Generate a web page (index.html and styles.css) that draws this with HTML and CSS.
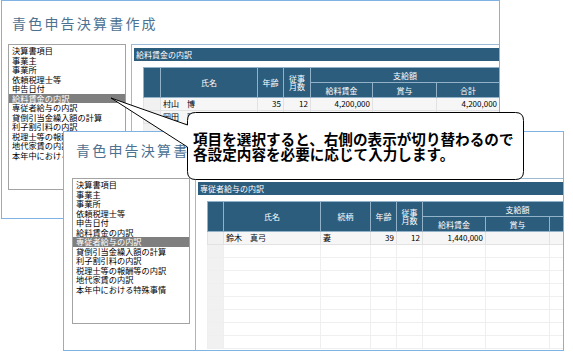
FILE: index.html
```html
<!DOCTYPE html>
<html lang="ja">
<head>
    <meta charset="UTF-8">
    <meta name="viewport" content="width=device-width, initial-scale=1.0">
    <title>青色申告決算書作成</title>
    <link rel="stylesheet" href="styles.css">
</head>
<body>
    <!-- 奥のウィンドウ : 給料賃金の内訳 -->
    <div class="win win-back">
        <div class="win-title">青色申告決算書作成</div>
        <div class="win-body">
            <ul class="item-list">
                <li>決算書項目</li>
                <li>事業主</li>
                <li>事業所</li>
                <li>依頼税理士等</li>
                <li>申告日付</li>
                <li class="selected">給料賃金の内訳</li>
                <li>専従者給与の内訳</li>
                <li>貸倒引当金繰入額の計算</li>
                <li>利子割引料の内訳</li>
                <li>税理士等の報酬等の内訳</li>
                <li>地代家賃の内訳</li>
                <li>本年中における特殊事情</li>
            </ul>
            <div class="panel">
                <div class="panel-bar">給料賃金の内訳</div>
                <table class="grid grid-back">
                    <colgroup>
                        <col style="width:17px">
                        <col style="width:97px">
                        <col style="width:26px">
                        <col style="width:27px">
                        <col style="width:62px">
                        <col style="width:64px">
                        <col style="width:63px">
                    </colgroup>
                    <tr>
                        <th rowspan="2"></th>
                        <th rowspan="2">氏名</th>
                        <th rowspan="2">年齢</th>
                        <th rowspan="2" class="two-line">従事<br>月数</th>
                        <th colspan="3">支給額</th>
                    </tr>
                    <tr>
                        <th>給料賃金</th>
                        <th>賞与</th>
                        <th>合計</th>
                    </tr>
                    <tr class="filled">
                        <td class="row-head"></td>
                        <td>村山　博</td>
                        <td class="num">35</td>
                        <td class="num">12</td>
                        <td class="num">4,200,000</td>
                        <td></td>
                        <td class="num">4,200,000</td>
                    </tr>
                    <tr class="filled">
                        <td class="row-head"></td>
                        <td>岡田　聡</td>
                        <td class="num">28</td>
                        <td class="num">12</td>
                        <td class="num">3,000,000</td>
                        <td></td>
                        <td class="num">3,000,000</td>
                    </tr>
                    <tr>
                        <td class="row-head"></td>
                        <td></td><td></td><td></td><td></td><td></td><td></td>
                    </tr>
                </table>
            </div>
        </div>
    </div>

    <!-- 手前のウィンドウ : 専従者給与の内訳 -->
    <div class="win win-front">
        <div class="win-title">青色申告決算書作成</div>
        <div class="win-body">
            <ul class="item-list">
                <li>決算書項目</li>
                <li>事業主</li>
                <li>事業所</li>
                <li>依頼税理士等</li>
                <li>申告日付</li>
                <li>給料賃金の内訳</li>
                <li class="selected">専従者給与の内訳</li>
                <li>貸倒引当金繰入額の計算</li>
                <li>利子割引料の内訳</li>
                <li>税理士等の報酬等の内訳</li>
                <li>地代家賃の内訳</li>
                <li>本年中における特殊事情</li>
            </ul>
            <div class="panel">
                <div class="panel-bar">専従者給与の内訳</div>
                <table class="grid grid-front">
                    <colgroup>
                        <col style="width:16px">
                        <col style="width:97px">
                        <col style="width:50px">
                        <col style="width:26px">
                        <col style="width:26px">
                        <col style="width:63px">
                        <col style="width:64px">
                        <col style="width:63px">
                    </colgroup>
                    <tr>
                        <th rowspan="2"></th>
                        <th rowspan="2">氏名</th>
                        <th rowspan="2">続柄</th>
                        <th rowspan="2">年齢</th>
                        <th rowspan="2" class="two-line">従事<br>月数</th>
                        <th colspan="3">支給額</th>
                    </tr>
                    <tr>
                        <th>給料賃金</th>
                        <th>賞与</th>
                        <th></th>
                    </tr>
                    <tr class="filled">
                        <td class="row-head"></td>
                        <td>鈴木　真弓</td>
                        <td>妻</td>
                        <td class="num">39</td>
                        <td class="num">12</td>
                        <td class="num">1,440,000</td>
                        <td></td>
                        <td></td>
                    </tr>
                    <tr><td class="row-head"></td><td></td><td></td><td></td><td></td><td></td><td></td><td></td></tr>
                    <tr><td class="row-head"></td><td></td><td></td><td></td><td></td><td></td><td></td><td></td></tr>
                    <tr><td class="row-head"></td><td></td><td></td><td></td><td></td><td></td><td></td><td></td></tr>
                    <tr><td class="row-head"></td><td></td><td></td><td></td><td></td><td></td><td></td><td></td></tr>
                    <tr><td class="row-head"></td><td></td><td></td><td></td><td></td><td></td><td></td><td></td></tr>
                    <tr><td class="row-head"></td><td></td><td></td><td></td><td></td><td></td><td></td><td></td></tr>
                    <tr><td class="row-head"></td><td></td><td></td><td></td><td></td><td></td><td></td><td></td></tr>
                    <tr><td class="row-head"></td><td></td><td></td><td></td><td></td><td></td><td></td><td></td></tr>
                </table>
            </div>
        </div>
    </div>

    <!-- 吹き出し -->
    <div class="callout">
        <svg class="callout-shape" width="573" height="361" viewBox="0 0 573 361">
            <path d="M195.5 112.5 H515.5 Q523.5 112.5 523.5 120.5 V171.5 Q523.5 179.5 515.5 179.5 H195.5 Q187.5 179.5 187.5 171.5 V147 L111 98 L187.5 125 V120.5 Q187.5 112.5 195.5 112.5 Z"
                  fill="#fff" stroke="#000" stroke-width="1"/>
        </svg>
        <p class="callout-text">項目を選択すると、右側の表示が切り替わるので<br>各設定内容を必要に応じて入力します。</p>
    </div>
</body>
</html>
```

FILE: styles.css
```css
body {
    margin: 0;
    width: 573px;
    height: 361px;
    position: relative;
    overflow: hidden;
    background: #fff;
    font-family: "Noto Sans CJK JP", sans-serif;
    color: #000;
}

.win {
    position: absolute;
    box-sizing: border-box;
    border: 1px solid #7fb3e4;
    background: #fff;
    display: flex;
    flex-direction: column;
    overflow: hidden;
}
.win-back {
    left: 1px;
    top: 0;
    width: 499px;
    height: 219px;
}
.win-front {
    left: 63px;
    top: 131px;
    width: 501px;
    height: 220px;
}

.win-title {
    height: 43px;
    box-sizing: border-box;
    padding: 13px 0 0 10px;
    font-size: 14px;
    line-height: 18px;
    letter-spacing: 2.2px;
    color: #4d7191;
    white-space: nowrap;
    flex-shrink: 0;
}
.win-front .win-title {
    height: 46px;
    padding: 9px 0 0 12px;
}

.win-body {
    display: flex;
    gap: 5px;
    flex: 1;
    min-height: 0;
    padding-left: 6px;
}
.win-front .win-body {
    padding-left: 8px;
}

.item-list {
    width: 118px;
    height: 146px;
    box-sizing: border-box;
    flex-shrink: 0;
    margin: 0;
    padding: 1px 0 0;
    list-style: none;
    border: 1px solid #a3a3a3;
    font-size: 8.2px;
    line-height: 9.5px;
    white-space: nowrap;
}
.item-list li {
    padding-left: 3px;
}
.item-list .selected {
    background: #7f7f7f;
    color: #fff;
}

.panel {
    flex: 1;
    min-width: 0;
    border-top: 1px solid #9dbad4;
    border-left: 1px solid #9dbad4;
    padding: 3px 0 0 2px;
    overflow: hidden;
}
.panel-bar {
    height: 13px;
    background: #2d5d7d;
    color: #fff;
    font-size: 8px;
    line-height: 13px;
    padding-left: 2px;
    white-space: nowrap;
}

.grid {
    margin: 6px 0 0 9px;
    border-collapse: collapse;
    table-layout: fixed;
    font-size: 8px;
}
.grid-back {
    width: 356px;
}
.grid-front {
    width: 405px;
}
.grid th {
    height: 14px;
    padding: 0;
    background: #2d5d7d;
    color: #fff;
    font-weight: normal;
    line-height: 9px;
    border: 1px solid #92b2c9;
    white-space: nowrap;
}
.grid th.two-line {
    line-height: 8px;
}
.grid td {
    height: 12px;
    padding: 0 2px;
    line-height: 12px;
    border: 1px solid #efefef;
    background: #fff;
    white-space: nowrap;
    overflow: hidden;
}
.grid .filled td {
    background: #f6f6f6;
    border-color: #e2e2e2;
}
.grid td.row-head {
    background: #f1f1f1;
}
.grid td.num {
    text-align: right;
}

.callout {
    position: absolute;
    left: 0;
    top: 0;
    width: 573px;
    height: 361px;
    pointer-events: none;
}
.callout-shape {
    position: absolute;
    left: 0;
    top: 0;
}
.callout-text {
    position: absolute;
    left: 193px;
    top: 131px;
    margin: 0;
    font-size: 14.6px;
    font-weight: bold;
    line-height: 15px;
    white-space: nowrap;
}
```
